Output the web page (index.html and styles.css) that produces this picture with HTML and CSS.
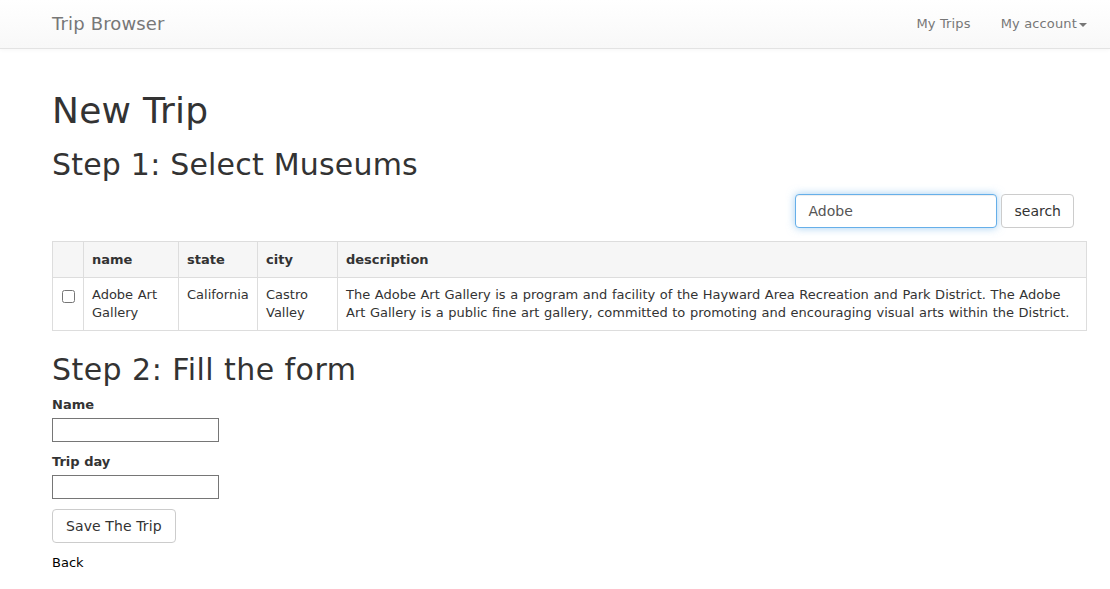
FILE: index.html
```html
<!DOCTYPE html>
<html>
<head>
<meta charset="utf-8">
<title>Trip Browser</title>
<link rel="stylesheet" href="styles.css">
</head>
<body>
<nav class="navbar">
  <div class="navbar-inner">
    <a class="brand" href="#">Trip Browser</a>
    <ul class="nav-links">
      <li><a href="#">My Trips</a></li>
      <li><a href="#" class="last">My account<span class="caret"></span></a></li>
    </ul>
  </div>
</nav>
<main class="container">
  <h1 class="title">New Trip</h1>
  <h2 class="step step-first">Step 1: Select Museums</h2>
  <form class="search-form">
    <input class="search-input" type="text" value="Adobe">
    <button class="btn" type="button">search</button>
  </form>
  <table class="museums">
    <colgroup>
      <col class="c-check">
      <col class="c-name">
      <col class="c-state">
      <col class="c-city">
      <col>
    </colgroup>
    <thead>
      <tr>
        <th></th>
        <th>name</th>
        <th>state</th>
        <th>city</th>
        <th>description</th>
      </tr>
    </thead>
    <tbody>
      <tr>
        <td><input type="checkbox" class="check"></td>
        <td>Adobe Art Gallery</td>
        <td>California</td>
        <td>Castro Valley</td>
        <td>The Adobe Art Gallery is a program and facility of the Hayward Area Recreation and Park District. The Adobe Art Gallery is a public fine art gallery, committed to promoting and encouraging visual arts within the District.</td>
      </tr>
    </tbody>
  </table>
  <h2 class="step step-second">Step 2: Fill the form</h2>
  <form class="trip-form">
    <label class="field-label">Name</label>
    <input class="field-input" type="text">
    <label class="field-label">Trip day</label>
    <input class="field-input" type="text">
    <button class="btn btn-save" type="button">Save The Trip</button>
  </form>
  <a class="back" href="#">Back</a>
</main>
</body>
</html>
```
FILE: styles.css
```css
* { box-sizing: border-box; }
html, body { margin: 0; padding: 0; }
body {
  font-family: "DejaVu Sans", Verdana, sans-serif;
  font-size: 13px;
  line-height: 18px;
  color: #333;
  background: #fff;
}
.navbar {
  height: 49px;
  background: linear-gradient(to bottom, #ffffff 0%, #f8f8f8 100%);
  border-bottom: 1px solid #e3e3e3;
  box-shadow: 0 1px 4px rgba(0,0,0,0.04);
}
.navbar-inner {
  height: 48px;
  display: flex;
  align-items: center;
  justify-content: space-between;
  padding: 0 23px 0 52px;
}
.brand {
  font-size: 18px;
  color: #777;
  text-decoration: none;
  line-height: 20px;
  letter-spacing: 0.15px;
}
.nav-links {
  list-style: none;
  margin: 0;
  padding: 0;
  display: flex;
}
.nav-links a {
  display: block;
  color: #777;
  text-decoration: none;
  padding: 15px 15px;
  line-height: 18px;
  letter-spacing: 0.15px;
}
.nav-links a.last { padding-right: 0; }
.caret {
  display: inline-block;
  width: 0;
  height: 0;
  margin-left: 2px;
  vertical-align: middle;
  border-top: 4px solid #777;
  border-left: 4px solid transparent;
  border-right: 4px solid transparent;
}
.container {
  padding: 0 23px 20px 52px;
}
.title {
  font-size: 36px;
  font-weight: 500;
  line-height: 1.1;
  margin: 42px 0 0;
  letter-spacing: 0.25px;
}
.step {
  font-size: 30px;
  font-weight: 500;
  line-height: 1.1;
  margin: 0;
}
.step-first { margin-top: 17px; letter-spacing: 0.2px; }
.step-second { margin-top: 22px; letter-spacing: 0.45px; }
.search-form {
  display: flex;
  justify-content: flex-end;
  gap: 4px;
  margin: 13px 13px 13px 0;
}
.search-input {
  width: 202px;
  height: 34px;
  padding: 6px 12px;
  font-family: inherit;
  font-size: 14px;
  color: #555;
  border: 1px solid #66afe9;
  border-radius: 4px;
  outline: none;
  box-shadow: inset 0 1px 1px rgba(0,0,0,.075), 0 0 8px rgba(102,175,233,.6);
}
.btn {
  height: 34px;
  padding: 0 12px;
  font-family: inherit;
  font-size: 14px;
  color: #333;
  background: #fff;
  border: 1px solid #ccc;
  border-radius: 4px;
}
.museums {
  width: 100%;
  table-layout: fixed;
  border-collapse: collapse;
  border: 1px solid #ddd;
}
.c-check { width: 31px; }
.c-name { width: 95px; }
.c-state { width: 79px; }
.c-city { width: 80px; }
.museums th, .museums td {
  border: 1px solid #ddd;
  padding: 8px;
  text-align: left;
  vertical-align: top;
}
.museums td { word-spacing: 0.45px; }
.museums th {
  background: #f6f6f6;
  font-weight: bold;
  padding-top: 9px;
}
.check {
  margin: 4px 0 0 1px;
  width: 13px;
  height: 13px;
  display: block;
}
.trip-form {
  display: flex;
  flex-direction: column;
  align-items: flex-start;
  margin-top: 10px;
}
.field-label {
  font-weight: bold;
  display: block;
  margin-bottom: 4px;
}
.field-input {
  width: 167px;
  height: 24px;
  border: 1px solid #767676;
  border-radius: 0;
  padding: 1px 2px;
  font-family: inherit;
  font-size: 13px;
  margin-bottom: 11px;
}
.btn-save {
  margin-top: -1px;
  padding: 0 13px;
  letter-spacing: 0.1px;
}
.back {
  display: block;
  margin-top: 11px;
  color: #000;
  text-decoration: none;
}
```
